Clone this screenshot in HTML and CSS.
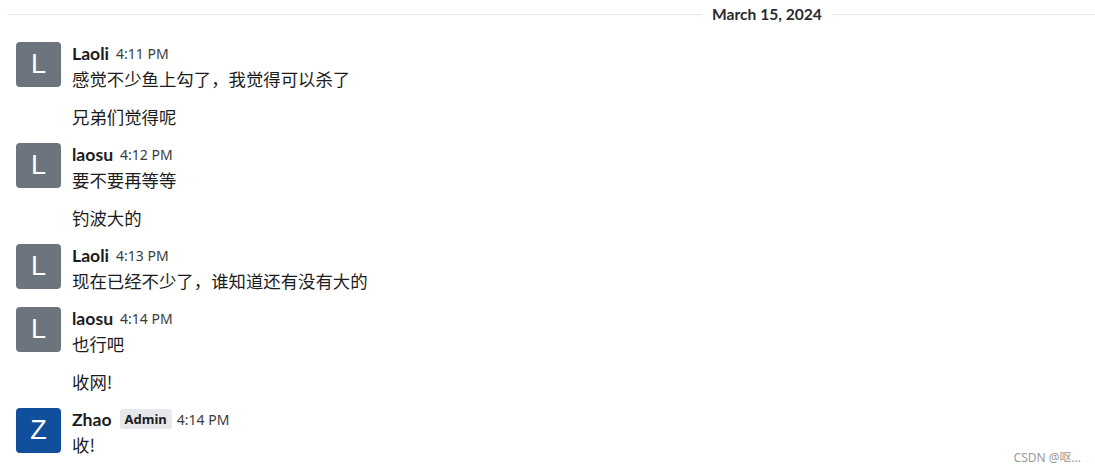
FILE: index.html
```html
<!DOCTYPE html>
<html lang="zh">
<head>
<meta charset="utf-8">
<link rel="stylesheet" href="styles.css">
</head>
<body>
<div class="chat">
  <div class="divider"><span class="date">March 15, 2024</span></div>

  <div class="msg">
    <div class="avatar gray">L</div>
    <div class="content">
      <div class="head"><span class="name">Laoli</span><span class="time">4:11 PM</span></div>
      <p>感觉不少鱼上勾了，我觉得可以杀了</p>
      <p>兄弟们觉得呢</p>
    </div>
  </div>

  <div class="msg">
    <div class="avatar gray">L</div>
    <div class="content">
      <div class="head"><span class="name">laosu</span><span class="time">4:12 PM</span></div>
      <p>要不要再等等</p>
      <p>钓波大的</p>
    </div>
  </div>

  <div class="msg">
    <div class="avatar gray">L</div>
    <div class="content">
      <div class="head"><span class="name">Laoli</span><span class="time">4:13 PM</span></div>
      <p>现在已经不少了，谁知道还有没有大的</p>
    </div>
  </div>

  <div class="msg">
    <div class="avatar gray">L</div>
    <div class="content">
      <div class="head"><span class="name">laosu</span><span class="time">4:14 PM</span></div>
      <p>也行吧</p>
      <p>收网!</p>
    </div>
  </div>

  <div class="msg">
    <div class="avatar blue">Z</div>
    <div class="content">
      <div class="head"><span class="name">Zhao</span><span class="badge">Admin</span><span class="time">4:14 PM</span></div>
      <p>收!</p>
    </div>
  </div>
</div>
<div class="watermark">CSDN @呕…</div>
</body>
</html>
```

FILE: styles.css
```css
html, body {
  margin: 0;
  padding: 0;
  background: #ffffff;
}
body {
  font-family: "Noto Sans", "Noto Sans CJK SC", sans-serif;
  color: #1d1c1d;
  width: 1095px;
  height: 473px;
  overflow: hidden;
  position: relative;
}
.chat {
  padding: 0 0 0 16px;
}
.divider {
  height: 29px;
  margin-left: -9px;
  position: relative;
  display: flex;
  align-items: center;
  justify-content: flex-start;
}
.divider::before {
  content: "";
  position: absolute;
  left: 0;
  right: 0;
  top: 14px;
  height: 1px;
  background: #e8e8e8;
}
.date {
  position: relative;
  margin-left: 695px;
  padding: 0 10px;
  background: #fff;
  font-family: "Lato", "Liberation Sans", sans-serif;
  font-weight: 700;
  font-size: 15.6px;
  color: #2b2b30;
  line-height: 29px;
}
.msg {
  display: flex;
  gap: 11px;
  margin-top: 13px;
}
.msg + .msg {
  margin-top: 14px;
}
.avatar {
  width: 45px;
  height: 45px;
  border-radius: 4px;
  flex: none;
  color: #fff;
  font-family: "Liberation Sans", "Noto Sans", sans-serif;
  font-size: 27px;
  display: flex;
  align-items: center;
  justify-content: center;
}
.gray { background: #6c757d; }
.blue { background: #0f4f9c; }
.content {
  display: flex;
  flex-direction: column;
}
.head {
  display: flex;
  align-items: center;
  height: 22px;
  margin-bottom: 3px;
}
.name {
  font-family: "Lato", "Liberation Sans", sans-serif;
  font-weight: 700;
  font-size: 17.6px;
  color: #1d1c1d;
}
.time {
  margin-left: 7px;
  font-family: "Noto Sans", "Liberation Sans", sans-serif;
  font-size: 14px;
  color: #3c3c40;
}
.badge {
  margin-left: 8px;
  background: #e6e8eb;
  border-radius: 3px;
  padding: 0 5px;
  height: 20px;
  line-height: 20px;
  font-family: "Noto Sans", "Liberation Sans", sans-serif;
  font-weight: 700;
  font-size: 13px;
  color: #1d1c1d;
}
.badge + .time {
  margin-left: 5px;
}
p {
  margin: 0;
  font-family: "Noto Sans CJK SC", "Noto Sans", sans-serif;
  font-size: 17.4px;
  line-height: 24px;
  color: #1d1c1d;
}
p + p {
  margin-top: 14px;
}
.watermark {
  position: absolute;
  right: 14px;
  bottom: 7px;
  font-family: "Noto Sans", "Noto Sans CJK SC", sans-serif;
  font-size: 12px;
  color: #999;
}
```
